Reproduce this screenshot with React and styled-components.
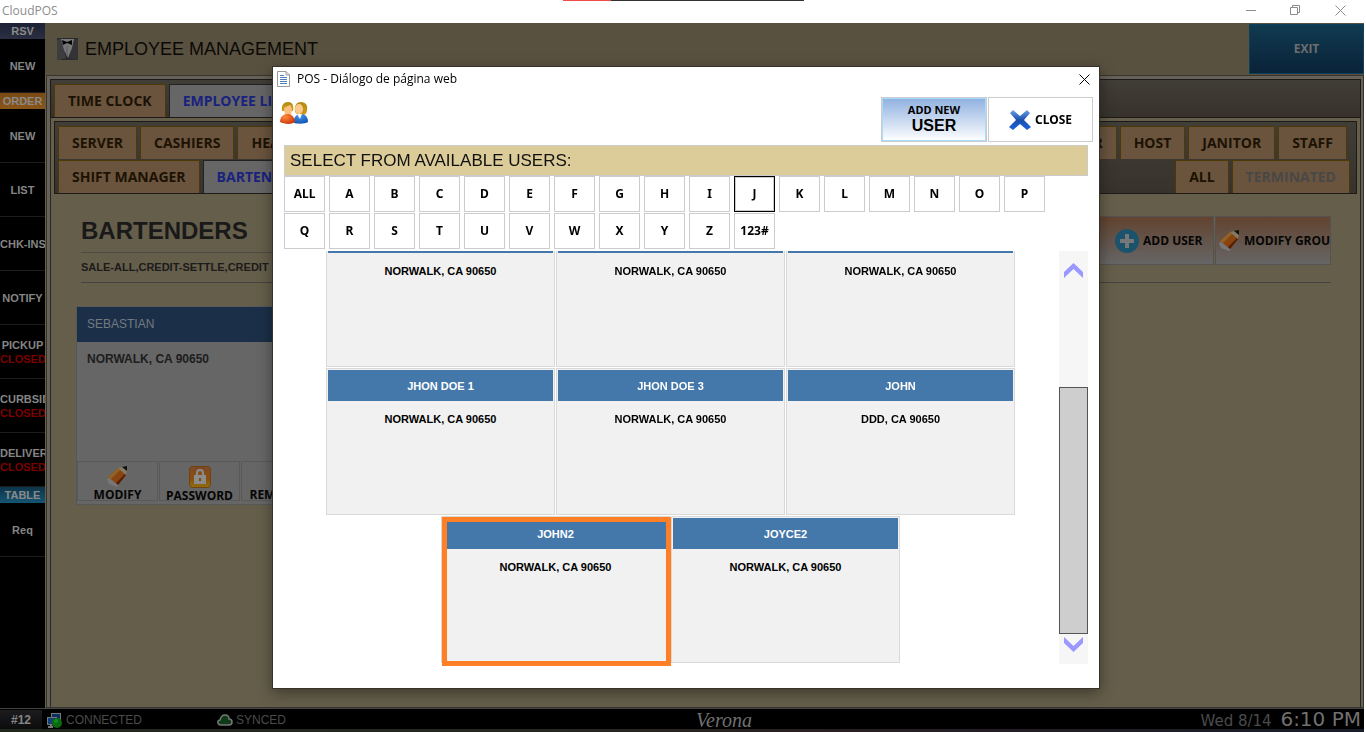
import React, { useState } from "react";
import styled, { createGlobalStyle, css } from "styled-components";

const letters = ["ALL", ..."ABCDEFGHIJKLMNOPQRSTUVWXYZ".split(""), "123#"];

const userRows = [
  [
    { id: 1, address: "NORWALK, CA 90650" },
    { id: 2, address: "NORWALK, CA 90650" },
    { id: 3, address: "NORWALK, CA 90650" },
  ],
  [
    { id: 4, name: "JHON DOE 1", address: "NORWALK, CA 90650" },
    { id: 5, name: "JHON DOE 3", address: "NORWALK, CA 90650" },
    { id: 6, name: "JOHN", address: "DDD, CA 90650" },
  ],
  [
    { id: 7, name: "JOHN2", address: "NORWALK, CA 90650" },
    { id: 8, name: "JOYCE2", address: "NORWALK, CA 90650" },
  ],
];

const sideGroups = [
  { title: "RSV", tone: "slate", items: [{ text: "NEW" }] },
  {
    title: "ORDER",
    tone: "orange",
    items: [
      { text: "NEW" },
      { text: "LIST" },
      { text: "CHK-INS" },
      { text: "NOTIFY" },
      { text: "PICKUP", closed: true },
      { text: "CURBSIDE", closed: true },
      { text: "DELIVERY", closed: true },
    ],
  },
  { title: "TABLE", tone: "blue", items: [{ text: "Req" }] },
];

const PencilIcon = () => (
  <svg width="21" height="21" viewBox="0 0 21 21" aria-hidden="true">
    <path d="M0 13 L2 18 L10 21 L12 19 L3 11Z" fill="#77777a" />
    <path d="M1 11 L11 2 L19 9 L11 19Z" fill="#8a4410" />
    <path d="M1 11 L11 2 L13 4 L4 13Z" fill="#8f6428" />
    <path d="M9 17 L18 8 L19 9 L11 19Z" fill="#541d05" />
    <path d="M11 2 L16 1 L20 5 L19 9Z" fill="#857a62" />
    <path d="M15 1 L20 0 L20 5Z" fill="#111" />
  </svg>
);

const LockIcon = () => (
  <svg width="22" height="22" viewBox="0 0 22 22" aria-hidden="true">
    <defs>
      <linearGradient id="lock" x1="0" y1="0" x2="0" y2="1">
        <stop offset="0" stopColor="#7c4a2c" />
        <stop offset="0.6" stopColor="#8a4f0b" />
        <stop offset="1" stopColor="#8f7010" />
      </linearGradient>
    </defs>
    <rect x="0.5" y="0.5" width="21" height="21" rx="3" fill="url(#lock)" stroke="#70420e" />
    <path d="M8 10 V7 a3 3 0 0 1 6 0 V10" fill="none" stroke="#8c8c8c" strokeWidth="2" />
    <rect x="5" y="9" width="12" height="9" fill="#8c8c8c" />
    <rect x="10" y="12" width="2" height="3" fill="#7a4a10" />
  </svg>
);

const TuxedoIcon = () => (
  <svg width="21" height="22" viewBox="0 0 21 22" aria-hidden="true">
    <rect width="21" height="22" fill="#29292b" />
    <path d="M0 2 L5 0 L9 20 L3 22 L0 22Z" fill="#3d3d40" />
    <path d="M21 2 L16 0 L12 20 L18 22 L21 22Z" fill="#333336" />
    <path d="M4 1 L17 1 L15 10 L11 20 L7 12Z" fill="#77777a" />
    <path d="M5 2 L10 4 L15 2 L15 7 L10 5 L6 7Z" fill="#050505" />
    <path d="M10 8 V18" stroke="#5a5a5c" />
  </svg>
);

const PageIcon = () => (
  <svg width="13" height="16" viewBox="0 0 13 16" aria-hidden="true">
    <path d="M0.5 0.5 H9 L12.5 4 V15.5 H0.5Z" fill="#fff" stroke="#9a9a9a" />
    <path d="M9 0.5 V4 H12.5" fill="none" stroke="#9a9a9a" />
    <path d="M3 4.5H7M3 6.5H10M3 8.5H10M3 10.5H10M3 12.5H10" stroke="#4d7fb8" />
  </svg>
);

const UsersIcon = () => (
  <svg width="29" height="22" viewBox="0 0 29 22" aria-hidden="true">
    <defs>
      <linearGradient id="hair" x1="0" y1="0" x2="0" y2="1">
        <stop offset="0" stopColor="#b08a10" />
        <stop offset="1" stopColor="#d09a18" />
      </linearGradient>
      <radialGradient id="red" cx="0.35" cy="0.3" r="0.8">
        <stop offset="0" stopColor="#ff8a3d" />
        <stop offset="1" stopColor="#c8310a" />
      </radialGradient>
      <radialGradient id="blue" cx="0.4" cy="0.2" r="0.8">
        <stop offset="0" stopColor="#4a98e8" />
        <stop offset="1" stopColor="#0f56b8" />
      </radialGradient>
    </defs>
    <path d="M15 10 C14 3 17 0 21 0 C26 0 28 4 27 8 C27 11 25 13 23 13 L18 13Z" fill="url(#hair)" />
    <ellipse cx="19" cy="7" rx="4" ry="5" fill="#fbcb8e" />
    <path d="M14 21 C13 16 16 12 21 12 C26 12 28 16 28 20 C25 22 18 22 14 21Z" fill="url(#blue)" />
    <path d="M17 12 L20 17 L22 12Z" fill="#fff" />
    <path d="M2 9 C1 3 4 0 8 0 C12 0 14 3 13 9Z" fill="url(#hair)" />
    <ellipse cx="8" cy="8" rx="4" ry="6" fill="#fbc080" />
    <path d="M3 6 C6 5 8 4 10 3 C12 3 12 4 13 6 C13 1 10 0 7 1 C4 2 3 3 3 6Z" fill="url(#hair)" />
    <path d="M0 20 C0 15 3 12 8 12 C12 12 15 16 15 20 C11 23 4 22 0 20Z" fill="url(#red)" />
  </svg>
);

const CrossIcon = ({ size = 22 }) => (
  <svg width={size} height={size} viewBox="0 0 22 22" aria-hidden="true">
    <defs>
      <linearGradient id="cross" x1="0" y1="0" x2="0" y2="1">
        <stop offset="0" stopColor="#6ba0e8" />
        <stop offset="0.5" stopColor="#1b4fae" />
        <stop offset="1" stopColor="#1d63dc" />
      </linearGradient>
    </defs>
    <path
      d="M4 1 L11 7 L18 1 L21 4 L15 11 L22 18 L18 21 L11 15 L4 21 L0 18 L7 11 L1 4Z"
      fill="url(#cross)"
    />
  </svg>
);

const ThinCross = ({ color }) => (
  <svg width="11" height="11" viewBox="0 0 11 11" aria-hidden="true">
    <path d="M0.5 0.5 L10.5 10.5 M10.5 0.5 L0.5 10.5" stroke={color} />
  </svg>
);

const PlusIcon = () => (
  <svg width="24" height="24" viewBox="0 0 24 24" aria-hidden="true">
    <circle cx="12" cy="12" r="12" fill="#1c536c" />
    <path d="M10 5h4v5h5v4h-5v5h-4v-5H5v-4h5Z" fill="#77777a" />
  </svg>
);

const NetworkIcon = () => (
  <svg width="16" height="16" viewBox="0 0 16 16" aria-hidden="true">
    <rect x="4.5" y="1.5" width="9" height="8" fill="#0b2f5e" stroke="#777" />
    <rect x="0.5" y="5.5" width="9" height="7" fill="#103f78" stroke="#777" />
    <path d="M1 15H6M4 12V15" stroke="#777" strokeWidth="2" />
    <circle cx="10" cy="11" r="5" fill="#0a6a10" />
    <circle cx="9" cy="9" r="2" fill="#138a1b" />
  </svg>
);

const CloudIcon = () => (
  <svg width="16" height="12" viewBox="0 0 16 12" aria-hidden="true">
    <path
      d="M4 11 C0 11 0 6 3 6 C4 2 6 1 8 1 C11 1 12 3 12 5 C16 5 16 11 12 11Z"
      fill="#0d3a18"
      stroke="#777"
      strokeWidth="1.5"
    />
  </svg>
);

const Chevron = ({ down }) => (
  <svg width="19" height="15" viewBox="0 0 19 15" aria-hidden="true">
    <path
      d={down ? "M0 0 L9.5 9 L19 0 V6 L9.5 15 L0 6Z" : "M0 15 L9.5 6 L19 15 V9 L9.5 0 L0 9Z"}
      fill="#9999ff"
    />
  </svg>
);

const App = () => {
  const [letter, setLetter] = useState("J");
  const [selected, setSelected] = useState(7);

  return (
    <Screen>
      <GlobalStyle />
      <WindowBar>
        <TopStrip />
        <WindowTitle>CloudPOS</WindowTitle>
        <WindowControls>
          <WindowButton aria-label="Minimize">
            <svg width="10" height="11" aria-hidden="true">
              <path d="M0 5.5H10" stroke="#8c8c8c" />
            </svg>
          </WindowButton>
          <WindowButton aria-label="Restore">
            <svg width="11" height="11" aria-hidden="true">
              <path d="M0.5 2.5H7.5V9.5H0.5ZM2.5 2.5V0.5H9.5V7.5H7.5" fill="none" stroke="#8c8c8c" />
            </svg>
          </WindowButton>
          <WindowButton aria-label="Close window">
            <ThinCross color="#8c8c8c" />
          </WindowButton>
        </WindowControls>
      </WindowBar>

      <Workspace>
        <Sidebar>
          {sideGroups.map((group) => (
            <React.Fragment key={group.title}>
              <SideTitle $tone={group.tone}>{group.title}</SideTitle>
              {group.items.map((item) => (
                <SideButton key={item.text}>
                  {item.text}
                  {item.closed && <Closed>CLOSED</Closed>}
                </SideButton>
              ))}
            </React.Fragment>
          ))}
        </Sidebar>

        <Content>
          <PageHeader>
            <TuxedoIcon />
            <PageTitle>EMPLOYEE MANAGEMENT</PageTitle>
            <ExitButton>EXIT</ExitButton>
          </PageHeader>
          <OuterPanel>
            <TabStrip>
              <TabRow>
                <Tab>TIME CLOCK</Tab>
                <Tab $active>EMPLOYEE LIST</Tab>
              </TabRow>
            </TabStrip>
            <InnerPanel>
              <TabStrip>
                <TabRow $inset>
                  <Tab>SERVER</Tab>
                  <Tab>CASHIERS</Tab>
                  <Tab>HEAD</Tab>
                  <Spacer />
                  <Tab>BUSSER</Tab>
                  <Tab>HOST</Tab>
                  <Tab>JANITOR</Tab>
                  <Tab>STAFF</Tab>
                </TabRow>
                <TabRow>
                  <Tab>SHIFT MANAGER</Tab>
                  <Tab $active>BARTENDERS</Tab>
                  <Spacer />
                  <Tab>ALL</Tab>
                  <Tab disabled>TERMINATED</Tab>
                </TabRow>
              </TabStrip>
              <Body>
                <GroupHeader>
                  <GroupName>BARTENDERS</GroupName>
                  <GroupButton>
                    <PlusIcon />
                    ADD USER
                  </GroupButton>
                  <GroupButton $tight>
                    <PencilIcon />
                    MODIFY GROUP
                  </GroupButton>
                </GroupHeader>
                <Permissions>SALE-ALL,CREDIT-SETTLE,CREDIT</Permissions>
                <Employee>
                  <EmployeeName>SEBASTIAN</EmployeeName>
                  <EmployeeAddress>NORWALK, CA 90650</EmployeeAddress>
                  <EmployeeActions>
                    <ActionButton>
                      <PencilIcon />
                      MODIFY
                    </ActionButton>
                    <ActionButton>
                      <LockIcon />
                      PASSWORD
                    </ActionButton>
                    <ActionButton>
                      <Dim>
                        <CrossIcon size={21} />
                      </Dim>
                      REMOVE IT
                    </ActionButton>
                  </EmployeeActions>
                </Employee>
              </Body>
            </InnerPanel>
          </OuterPanel>
        </Content>
      </Workspace>

      <Footer>
        <Station>#12</Station>
        <Status>
          <NetworkIcon />
          CONNECTED
        </Status>
        <Status>
          <CloudIcon />
          SYNCED
        </Status>
        <Place>Verona</Place>
        <Today>
          Wed 8/14 <Clock>6:10 PM</Clock>
        </Today>
      </Footer>
      <Taskbar />

      <Overlay>
        <Dialog role="dialog" aria-labelledby="dialog-title">
          <DialogBar>
            <PageIcon />
            <DialogTitle id="dialog-title">POS - Diálogo de página web</DialogTitle>
            <DialogClose aria-label="Close dialog">
              <ThinCross color="#000" />
            </DialogClose>
          </DialogBar>
          <DialogTools>
            <UsersIcon />
            <Spacer />
            <AddUserButton>
              ADD NEW
              <AddUserBig>USER</AddUserBig>
            </AddUserButton>
            <CloseButton>
              <CrossIcon />
              CLOSE
            </CloseButton>
          </DialogTools>
          <DialogBody>
            <Banner>SELECT FROM AVAILABLE USERS:</Banner>
            <Letters>
              {letters.map((l) => (
                <LetterButton key={l} $active={l === letter} onClick={() => setLetter(l)}>
                  {l}
                </LetterButton>
              ))}
            </Letters>
            <UserArea>
              <UserList>
                {userRows.map((row, i) => (
                  <UserRow key={i}>
                    {row.map((user) => (
                      <UserCard
                        key={user.id}
                        $selected={user.id === selected}
                        onClick={() => setSelected(user.id)}
                      >
                        <UserName>{user.name}</UserName>
                        <UserAddress>{user.address}</UserAddress>
                      </UserCard>
                    ))}
                  </UserRow>
                ))}
              </UserList>
              <Scroll>
                <ScrollButton aria-label="Scroll up" $up>
                  <Chevron />
                </ScrollButton>
                <ScrollTrack>
                  <ScrollThumb />
                </ScrollTrack>
                <ScrollButton aria-label="Scroll down">
                  <Chevron down />
                </ScrollButton>
              </Scroll>
            </UserArea>
          </DialogBody>
        </Dialog>
      </Overlay>
    </Screen>
  );
};
export default App;

const arial = `"Liberation Sans", Arial, sans-serif`;
const segoe = `"Open Sans", "Noto Sans", sans-serif`;
const tahoma = `"Noto Sans", "DejaVu Sans", sans-serif`;
const verdana = `"DejaVu Sans", Verdana, sans-serif`;

const GlobalStyle = createGlobalStyle`
  * {
    box-sizing: border-box;
  }
  body {
    margin: 0;
    background: #fff;
    font-family: ${arial};
  }
  button {
    margin: 0;
    padding: 0;
    border: 0;
    background: none;
    color: inherit;
    white-space: nowrap;
  }
  svg {
    flex: none;
  }
`;

const Screen = styled.div`
  display: flex;
  flex-direction: column;
  min-height: 100vh;
  overflow: hidden;
  padding-right: 2px;
`;

const WindowBar = styled.header`
  position: relative;
  display: flex;
  align-items: center;
  justify-content: space-between;
  height: 23px;
  padding: 0 18px 2px 2px;
  background: #fff;
`;
const TopStrip = styled.div`
  position: absolute;
  top: 0;
  left: 563px;
  width: 241px;
  height: 1px;
  background: linear-gradient(90deg, #f04a4a 48px, #333 48px);
`;
const WindowTitle = styled.span`
  font: 12px/20px ${segoe};
  color: #8c8c8c;
`;
const WindowControls = styled.div`
  display: flex;
  gap: 34px;
`;
const WindowButton = styled.button`
  display: flex;
`;

const Workspace = styled.div`
  display: flex;
  flex: 1;
  min-height: 0;
`;

const tones = {
  slate: "linear-gradient(#1c2233, #2a3042)",
  orange: "linear-gradient(#7a4a14, #8a5518)",
  blue: "linear-gradient(#0d3448, #155573)",
};

const Sidebar = styled.nav`
  width: 45px;
  flex: none;
  overflow: hidden;
  background: #000;
`;
const SideTitle = styled.div`
  height: 16px;
  background: ${(p) => tones[p.$tone]};
  color: #8a8a8a;
  font: bold 11px/16px ${arial};
  text-align: center;
`;
const SideButton = styled.button`
  display: flex;
  flex-direction: column;
  align-items: safe center;
  justify-content: center;
  width: 100%;
  height: 54px;
  border-bottom: 1px solid #1c1c1c;
  color: #858585;
  font: bold 11px/14px ${arial};
`;
const Closed = styled.span`
  color: #7c0000;
`;

const Content = styled.main`
  display: flex;
  flex: 1;
  flex-direction: column;
  min-width: 0;
  background: #655e4a;
`;
const PageHeader = styled.div`
  display: flex;
  align-items: center;
  height: 52px;
  padding: 1px 0 1px 12px;
  background: #595140;
`;
const PageTitle = styled.h1`
  flex: 1;
  margin: 0 0 0 7px;
  color: #0a0906;
  font: 18px/24px ${arial};
`;
const ExitButton = styled.button`
  width: 115px;
  height: 50px;
  border: 1px solid #0c405c;
  background: linear-gradient(#103a50, #0a2238);
  color: #6d6d6d;
  font: bold 12px/16px ${segoe};
`;

const OuterPanel = styled.section`
  display: flex;
  flex: 1;
  flex-direction: column;
  margin-left: 1px;
  padding: 3px 2px 0 3px;
  border: 1px solid #38342b;
  background: #66625a;
`;
const InnerPanel = styled.section`
  display: flex;
  flex: 1;
  flex-direction: column;
  padding: 3px 3px 0;
  border: solid #2a2721;
  border-width: 0 1px;
  background: #655e4a;
`;
const TabStrip = styled.div`
  padding: 4px 6px 0 3px;
  border: 1px solid #1d1b17;
  background: linear-gradient(#413e37, #37332c);
`;
const TabRow = styled.div`
  display: flex;
  gap: 3px;
  padding-right: ${(p) => (p.$inset ? "3px" : "0")};
  & + & {
    margin-top: 1px;
  }
`;
const Tab = styled.button`
  height: 33px;
  padding: 0 13px;
  border: 1px solid #4e3906;
  border-bottom: 0;
  background: #6a543e;
  color: #1c1203;
  font: bold 14px/20px ${segoe};

  &:disabled {
    color: #494846;
  }
  ${(p) =>
    p.$active &&
    css`
      border-color: #222;
      background: #666;
      color: #19227e;
    `}
`;
const Spacer = styled.div`
  flex: 1;
`;

const Body = styled.div`
  padding: 22px 26px 0 22px;
`;
const GroupHeader = styled.div`
  display: flex;
  gap: 1px;
  height: 37px;
  margin-left: 5px;
  border-bottom: 1px solid #4b4a45;
`;
const GroupName = styled.h2`
  flex: 1;
  margin: 0;
  color: #191919;
  font: bold 24px/30px ${arial};
`;
const GroupButton = styled.button`
  z-index: 1;
  display: flex;
  align-items: center;
  gap: 4px;
  width: 116px;
  height: 49px;
  padding-left: ${(p) => (p.$tight ? "3px" : "16px")};
  overflow: hidden;
  border: 1px solid #555250;
  background: linear-gradient(#62432f, #666);
  color: #060606;
  font: bold 12px/16px ${segoe};
`;
const Permissions = styled.p`
  margin: 0 0 23px 5px;
  border-bottom: 1px solid #42423f;
  color: #1b1b1b;
  font: bold 11px/29px ${arial};
`;
const Employee = styled.article`
  width: 348px;
  height: 199px;
  display: flex;
  flex-direction: column;
  border: 1px solid #56585a;
  background: #666;
`;
const EmployeeName = styled.h3`
  margin: 0;
  padding-left: 10px;
  background: #1b3048;
  color: #747a80;
  font: 12px/35px ${arial};
`;
const EmployeeAddress = styled.p`
  flex: 1;
  margin: 0;
  padding: 0 10px;
  color: #1d1d1d;
  font: bold 12px/34px ${arial};
`;
const EmployeeActions = styled.div`
  display: flex;
  gap: 1px;
  height: 40px;
  margin-bottom: 3px;
`;
const ActionButton = styled.button`
  display: flex;
  flex-direction: column;
  align-items: center;
  width: 81px;
  padding-top: 4px;
  overflow: hidden;
  border: 1px solid #595959;
  color: #050505;
  font: bold 12px/16px ${segoe};
`;
const Dim = styled.span`
  display: flex;
  opacity: 0.4;
`;

const Footer = styled.footer`
  display: grid;
  grid-template-columns: 42px 170px 172px 1fr auto;
  align-items: center;
  height: 21px;
  border-top: 1px solid #444;
  background: #000;
  color: #4b4b4b;
`;
const Station = styled.span`
  background: linear-gradient(#1c1c1f, #0b0b0c);
  color: #858585;
  font: bold 12px/20px ${arial};
  text-align: center;
`;
const Status = styled.span`
  display: flex;
  align-items: center;
  gap: 3px;
  padding-left: 5px;
  font: 12px/20px ${arial};
`;
const Place = styled.span`
  padding-left: 312px;
  color: #707070;
  font: italic 20px/20px "Liberation Serif", serif;
`;
const Today = styled.span`
  padding-right: 3px;
  font: 15px/20px ${verdana};
`;
const Clock = styled.time`
  margin-left: 4px;
  color: #707070;
  font-size: 20px;
`;
const Taskbar = styled.div`
  height: 3px;
  background: linear-gradient(90deg, #22271c, #262820 40%, #2a1f22 60%, #181d2a);
`;

const Overlay = styled.div`
  position: fixed;
  inset: 0;
  z-index: 2;
  display: flex;
  align-items: flex-start;
  justify-content: center;
  padding: 66px 0 0 6px;
`;
const Dialog = styled.section`
  width: 828px;
  max-width: 100%;
  border: 1px solid #35322a;
  background: #fff;
  box-shadow: 0 4px 14px rgba(0, 0, 0, 0.4);
`;
const DialogBar = styled.div`
  display: flex;
  align-items: center;
  height: 24px;
  padding: 0 9px 0 4px;
`;
const DialogTitle = styled.span`
  flex: 1;
  margin-left: 7px;
  color: #000;
  font: 12px/20px ${segoe};
`;
const DialogClose = styled.button`
  display: flex;
`;
const DialogTools = styled.div`
  display: flex;
  gap: 1px;
  padding: 6px 6px 3px 7px;

  > svg {
    margin-top: 5px;
  }
`;
const toolButton = css`
  height: 45px;
  border: 1px solid #ccc;
  color: #000;
`;
const AddUserButton = styled.button`
  ${toolButton}
  width: 106px;
  padding-bottom: 3px;
  background: linear-gradient(#8fb0e0, #fff);
  box-shadow: inset 0 0 0 1px #a4dcff;
  font: bold 11px/16px ${tahoma};
`;
const AddUserBig = styled.span`
  display: block;
  font: bold 16px/16px ${arial};
`;
const CloseButton = styled.button`
  ${toolButton}
  display: flex;
  align-items: center;
  justify-content: center;
  gap: 4px;
  width: 105px;
  background: #fff;
  font: bold 12px/16px ${tahoma};
`;
const DialogBody = styled.div`
  padding: 0 11px 24px;
`;
const Banner = styled.h2`
  margin: 0;
  padding-left: 5px;
  border: 1px solid #ccc;
  background: #dccc9a;
  color: #111;
  font: 17px/29px ${arial};
`;
const Letters = styled.div`
  display: flex;
  flex-wrap: wrap;
  gap: 1px 4px;
`;
const LetterButton = styled.button`
  width: 41px;
  height: 36px;
  border: 1px solid ${(p) => (p.$active ? "#000" : "#ccc")};
  box-shadow: ${(p) => (p.$active ? "inset 0 0 0 1px #ccc" : "none")};
  background: #fff;
  color: #000;
  font: bold 12px/16px ${tahoma};
`;
const UserArea = styled.div`
  display: flex;
  height: 413px;
  margin-top: 2px;
`;
/* the extra bottom space leaves room for the selection frame */
const UserList = styled.div`
  display: flex;
  flex: 1;
  flex-direction: column;
  justify-content: flex-end;
  gap: 1px;
  margin-bottom: -2px;
  padding: 0 2px 3px 0;
  overflow: hidden;
`;
const UserRow = styled.div`
  display: flex;
  flex: none;
  justify-content: center;
  gap: 1px;
`;
const UserCard = styled.button`
  position: relative;
  display: flex;
  flex-direction: column;
  width: 229px;
  height: 147px;
  padding: 1px;
  border: 1px solid #d9d9d9;
  background: #f1f1f1;
  color: #000;
  font: bold 11px/16px ${arial};

  ${(p) =>
    p.$selected &&
    css`
      z-index: 1;
      &::after {
        content: "";
        position: absolute;
        inset: 0 -2px -4px 0;
        border: 5px solid #ff7f27;
      }
    `}
`;
const UserName = styled.span`
  align-self: stretch;
  height: 31px;
  background: #4477aa;
  color: #fff;
  line-height: 33px;
`;
const UserAddress = styled.span`
  align-self: center;
  padding-top: 10px;
`;

const Scroll = styled.div`
  display: flex;
  flex-direction: column;
  width: 29px;
  background: #f6f6f6;
`;
const ScrollButton = styled.button`
  display: flex;
  align-items: ${(p) => (p.$up ? "center" : "flex-start")};
  justify-content: center;
  height: ${(p) => (p.$up ? "38px" : "30px")};
  padding-top: ${(p) => (p.$up ? "0" : "3px")};
`;
const ScrollTrack = styled.div`
  display: flex;
  flex: 1;
  flex-direction: column;
  justify-content: flex-end;
`;
const ScrollThumb = styled.div`
  height: 247px;
  border: 1px solid #555;
  background: #cecece;
`;
